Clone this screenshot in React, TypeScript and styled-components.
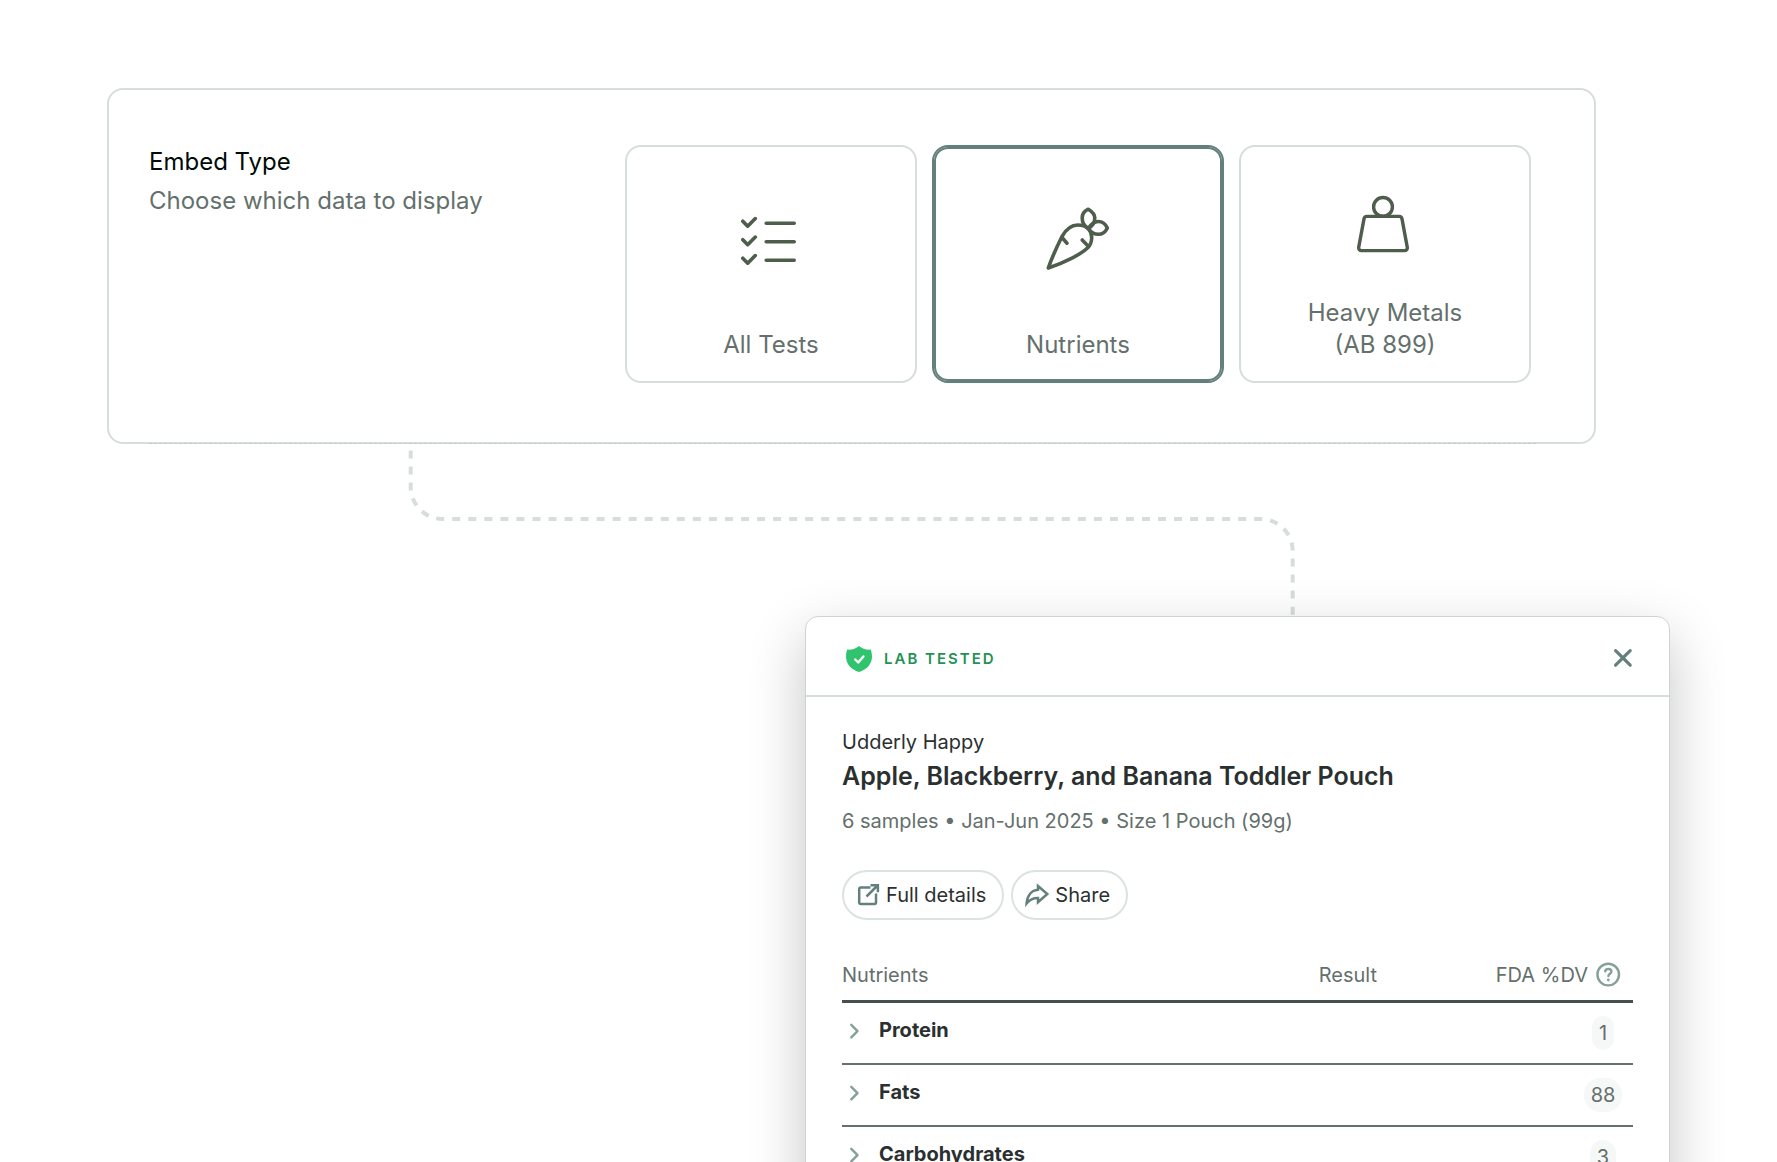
import React, { useState } from "react";
import styled, { createGlobalStyle } from "styled-components";

const color = {
  ink: "#000b08",
  text: "#2a302f",
  muted: "#64706c",
  line: "#d6dddb",
  rule: "#46514f",
  teal: "#64807d",
  sage: "#84a097",
  moss: "#4f5d4c",
};

const GlobalStyle = createGlobalStyle`
  *, *::before, *::after { box-sizing: border-box; }
  body {
    margin: 0;
    background: #fff;
    color: ${color.text};
    font-family: Inter, "Liberation Sans", sans-serif;
    font-size: 20px;
    line-height: 28px;
  }
  button { font: inherit; color: inherit; cursor: pointer; }
`;

const Page = styled.main`
  height: 100vh;
  overflow: hidden;
  padding: 88px 107px 0;
`;

const Card = styled.section`
  margin-right: 74px;
  padding: 0 58px 0 40px;
  border: 2px solid ${color.line};
  border-radius: 16px;
`;

const SettingRow = styled.div`
  display: grid;
  grid-template-columns: 476fr 906fr;
  margin-bottom: -2px;
  padding: 55px 5px 60px 0;
  border-bottom: 1px dashed #c2ccc9;
`;

const SettingText = styled.div`
  display: flex;
  flex-direction: column;
  gap: 7px;
  padding-top: 1px;
  font-size: 24px;
  line-height: 32px;
`;

const SettingTitle = styled.h2`
  margin: 0;
  font: inherit;
  color: ${color.ink};
`;

const SettingHint = styled.p`
  margin: 0;
  color: ${color.muted};
`;

const Options = styled.div`
  display: grid;
  grid-template-columns: repeat(3, 1fr);
  gap: 15px;
`;

const Option = styled.label<{ $selected: boolean }>`
  position: relative;
  display: flex;
  flex-direction: column;
  height: 238px;
  padding-bottom: 20px;
  border: 2px solid ${(p) => (p.$selected ? color.teal : color.line)};
  border-radius: 16px;
  box-shadow: ${(p) => (p.$selected ? `inset 0 0 0 2px ${color.teal}` : "none")};
  color: ${color.muted};
  font-size: 24px;
  line-height: 32px;
  text-align: center;
  cursor: pointer;
`;

const HiddenRadio = styled.input`
  position: absolute;
  opacity: 0;
  pointer-events: none;
`;

const OptionIcon = styled.span`
  flex: 1;
  display: grid;
  place-items: center;
`;

const OptionLabel = styled.span`
  padding: 0 60px;
`;

const Connector = styled.svg`
  display: block;
  margin-left: 301px;
`;

const Modal = styled.article`
  position: relative;
  width: 865px;
  margin-left: auto;
  border: 1px solid #cdd5d3;
  border-radius: 13px;
  background: #fff;
  box-shadow: 0 20px 56px rgba(0, 0, 0, 0.23);
`;

const ModalHeader = styled.header`
  display: flex;
  align-items: center;
  justify-content: space-between;
  height: 80px;
  padding: 6px 34px 0 40px;
  border-bottom: 2px solid ${color.line};
`;

const Badge = styled.span`
  display: flex;
  align-items: center;
  gap: 12px;
  color: #1f9254;
  font-size: 15px;
  font-weight: 600;
  letter-spacing: 2px;
`;

const CloseButton = styled.button`
  display: grid;
  padding: 0;
  border: 0;
  background: none;
  color: ${color.teal};
`;

const ModalBody = styled.div`
  padding: 31px 36px;
`;

const Brand = styled.p`
  margin: 0;
`;

const ProductName = styled.h1`
  margin: 4px 0 15px;
  font-size: 25px;
  line-height: 32px;
  font-weight: 600;
`;

const Meta = styled.p`
  margin: 0;
  color: ${color.muted};
`;

const Actions = styled.div`
  display: flex;
  gap: 7px;
  margin: 35px 0 41px;
`;

const PillButton = styled.button`
  display: flex;
  align-items: center;
  gap: 6px;
  height: 50px;
  padding: 0 16px 0 12px;
  border: 2px solid #dce2e0;
  border-radius: 25px;
  background: #fff;
  svg { color: ${color.teal}; }
`;

const Table = styled.table`
  width: 100%;
  border-collapse: separate;
  border-spacing: 0;
  table-layout: fixed;
`;

const HeadCell = styled.th<{ $width?: string; $right?: boolean }>`
  width: ${(p) => p.$width ?? "auto"};
  padding: 0 0 11px;
  border-bottom: 3px solid ${color.rule};
  color: ${color.muted};
  font-weight: 400;
  text-align: ${(p) => (p.$right ? "right" : "left")};
`;

const DvHead = styled.span`
  display: flex;
  align-items: center;
  justify-content: flex-end;
  gap: 7px;
  padding-right: 12px;
`;

const HelpButton = styled.button`
  display: grid;
  padding: 0;
  border: 0;
  background: none;
  color: ${color.sage};
`;

const Cell = styled.td`
  height: 62px;
  padding: 0;
  border-bottom: 2px solid #66716e;
`;

const NameCell = styled.th`
  padding: 13px 0 0 8px;
  border-bottom: 2px solid #66716e;
  text-align: left;
  vertical-align: top;
`;

const ExpandButton = styled.button`
  display: flex;
  align-items: center;
  gap: 21px;
  padding: 0;
  border: 0;
  background: none;
  font-weight: 700;
  svg { color: ${color.sage}; }
`;

const ValueSlot = styled.span`
  display: flex;
  justify-content: center;
  width: 60px;
  margin-left: auto;
`;

const Value = styled.span`
  padding: 3px 7px;
  border-radius: 16px;
  background: #f6f8f7;
  color: ${color.muted};
`;

const line = {
  fill: "none",
  stroke: "currentColor",
  strokeLinecap: "round",
  strokeLinejoin: "round",
} as const;

const ChecklistIcon = () => (
  <svg width="72" height="72" viewBox="0 0 72 72" {...line} stroke={color.moss} strokeWidth="3.6" aria-hidden="true">
    {[0, 18.5, 37].map((y) => (
      <path key={y} transform={`translate(0 ${y})`} d="M7.8 19.2l4.9 5 7.6-7.6M31.2 21.3h28" />
    ))}
  </svg>
);

const CarrotIcon = () => (
  <svg width="72" height="72" viewBox="0 0 72 72" {...line} stroke={color.moss} strokeWidth="3.6" aria-hidden="true">
    <path d="M6.3 66C10.5 54 15.5 43.5 20 34.5C24.5 26.5 29.5 23 35.7 23C40 23 43.8 24.3 46.3 26.7C48.8 29.2 49.8 32.5 49.7 36C49.5 40 48.5 43 46 45.5C39.5 52 23 60.5 6.3 66Z" />
    <path d="M20 35.5l5 5.7M40.2 38l6.3 6.5" />
    <path d="M46.3 26.5C42 24 40.2 20 40.2 16C40.2 12.5 42.5 9 46.3 7.2C50 9.5 52.8 12.5 52.8 16C52.8 20 50.5 24 46.3 26.5Z" />
    <path d="M46.3 26.5C49 22 52.5 19.5 56.3 19.5C60 19.5 63.5 22 65.3 26C63.5 30 60 32.3 56.3 32.3C52.5 32.3 49 30.5 46.3 26.5Z" />
  </svg>
);

const WeightIcon = () => (
  <svg width="72" height="72" viewBox="0 0 72 72" {...line} stroke={color.moss} strokeWidth="3.4" aria-hidden="true">
    <circle cx="34" cy="20.9" r="9.4" />
    <path d="M18 30.4H50a3 3 0 0 1 3 2.5L58.3 61.4a2.7 2.7 0 0 1-2.7 3.2H12.4a2.7 2.7 0 0 1-2.7-3.2L15 32.9a3 3 0 0 1 3-2.5Z" />
  </svg>
);

const ShieldIcon = () => (
  <svg width="26" height="26" viewBox="0 0 26 26" aria-hidden="true">
    <path fill="#31c46f" d="M13 0C16 2.5 20 4 24.8 3.6C25.2 4.8 26 8 26 10.5C26 18 21 23.5 13 26C5 23.5 0 18 0 10.5C0 8 .6 4.8 1.2 3.6C6 4 10 2.5 13 0Z" />
    <path {...line} stroke="#fff" strokeWidth="2.4" d="M9.2 13.5l3 3 5.2-6" />
  </svg>
);

const CloseIcon = () => (
  <svg width="24" height="24" viewBox="0 0 24 24" {...line} strokeWidth="3.2" aria-hidden="true">
    <path d="M4.6 3.6l14.6 14.6M19.2 3.6l-14.6 14.6" />
  </svg>
);

const ExternalIcon = () => (
  <svg width="24" height="24" viewBox="0 0 24 24" {...line} strokeWidth="2.5" strokeLinejoin="miter" strokeLinecap="butt" aria-hidden="true">
    <path d="M14.5 4.4H4.7A1.5 1.5 0 0 0 3.2 5.9V19.5A1.5 1.5 0 0 0 4.7 21H18.5A1.5 1.5 0 0 0 20 19.5V10.5" />
    <path d="M10.5 13.5L21.5 2.5M14.5 2.2H21.9V9.2" />
  </svg>
);

const ShareIcon = () => (
  <svg width="24" height="24" viewBox="1 0 24 24" {...line} strokeWidth="2.5" strokeLinejoin="miter" overflow="visible" aria-hidden="true">
    <path d="M2.6 20.5C3.2 12.5 7.5 7.2 14 6.8V3L23.3 11L14 19.2V15C9.5 14.8 6 16.5 2.6 20.5Z" />
  </svg>
);

const ChevronIcon = () => (
  <svg width="8" height="16" viewBox="0 0 8 16" {...line} strokeWidth="2.4" overflow="visible" aria-hidden="true">
    <path d="M1.3 2.8L7.5 9.1L1.3 15.4" />
  </svg>
);

const HelpIcon = () => (
  <svg width="26" height="26" viewBox="0 0 26 26" {...line} strokeWidth="2.4" aria-hidden="true">
    <circle cx="13.2" cy="12.6" r="10.8" />
    <path d="M10.2 9.3C10.5 7.8 11.7 7 13.4 7C15.2 7 16.4 8.1 16.4 9.6C16.4 11.8 13.5 11.8 13.4 14.1" />
    <path d="M13.3 18v.1" strokeWidth="2.8" />
  </svg>
);

const embedTypes = [
  { id: "all", label: "All Tests", Icon: ChecklistIcon },
  { id: "nutrients", label: "Nutrients", Icon: CarrotIcon },
  { id: "metals", label: "Heavy Metals (AB 899)", Icon: WeightIcon },
];

const nutrients = [
  { name: "Protein", dv: 1 },
  { name: "Fats", dv: 88 },
  { name: "Carbohydrates", dv: 3 },
];

export default function App() {
  const [selected, setSelected] = useState("nutrients");

  return (
    <Page>
      <GlobalStyle />
      <Card>
        <SettingRow>
          <SettingText>
            <SettingTitle id="embed-type">Embed Type</SettingTitle>
            <SettingHint>Choose which data to display</SettingHint>
          </SettingText>
          <Options role="radiogroup" aria-labelledby="embed-type">
            {embedTypes.map(({ id, label, Icon }) => (
              <Option key={id} $selected={selected === id}>
                <HiddenRadio
                  type="radio"
                  name="embed-type"
                  value={id}
                  checked={selected === id}
                  onChange={() => setSelected(id)}
                />
                <OptionIcon>
                  <Icon />
                </OptionIcon>
                <OptionLabel>{label}</OptionLabel>
              </Option>
            ))}
          </Options>
        </SettingRow>
      </Card>

      <Connector width="888" height="172" viewBox="0 0 888 172" fill="none" aria-hidden="true">
        <path
          d="M2.7 6.5V43A32 32 0 0 0 34.7 75H852.7A32 32 0 0 1 884.7 107V172"
          stroke={color.line}
          strokeWidth="4"
          strokeDasharray="8 8.04"
        />
      </Connector>

      <Modal>
        <ModalHeader>
          <Badge>
            <ShieldIcon />
            LAB TESTED
          </Badge>
          <CloseButton type="button" aria-label="Close">
            <CloseIcon />
          </CloseButton>
        </ModalHeader>
        <ModalBody>
          <Brand>Udderly Happy</Brand>
          <ProductName>Apple, Blackberry, and Banana Toddler Pouch</ProductName>
          <Meta>6 samples • Jan-Jun 2025 • Size 1 Pouch (99g)</Meta>
          <Actions>
            <PillButton type="button">
              <ExternalIcon />
              Full details
            </PillButton>
            <PillButton type="button">
              <ShareIcon />
              Share
            </PillButton>
          </Actions>
          <Table>
            <thead>
              <tr>
                <HeadCell scope="col">Nutrients</HeadCell>
                <HeadCell scope="col" $width="120px" $right>Result</HeadCell>
                <HeadCell scope="col" $width="256px">
                  <DvHead>
                    FDA %DV
                    <HelpButton type="button" aria-label="About FDA daily values">
                      <HelpIcon />
                    </HelpButton>
                  </DvHead>
                </HeadCell>
              </tr>
            </thead>
            <tbody>
              {nutrients.map(({ name, dv }) => (
                <tr key={name}>
                  <NameCell scope="row">
                    <ExpandButton type="button" aria-expanded={false}>
                      <ChevronIcon />
                      {name}
                    </ExpandButton>
                  </NameCell>
                  <Cell />
                  <Cell>
                    <ValueSlot>
                      <Value>{dv}</Value>
                    </ValueSlot>
                  </Cell>
                </tr>
              ))}
            </tbody>
          </Table>
        </ModalBody>
      </Modal>
    </Page>
  );
}
